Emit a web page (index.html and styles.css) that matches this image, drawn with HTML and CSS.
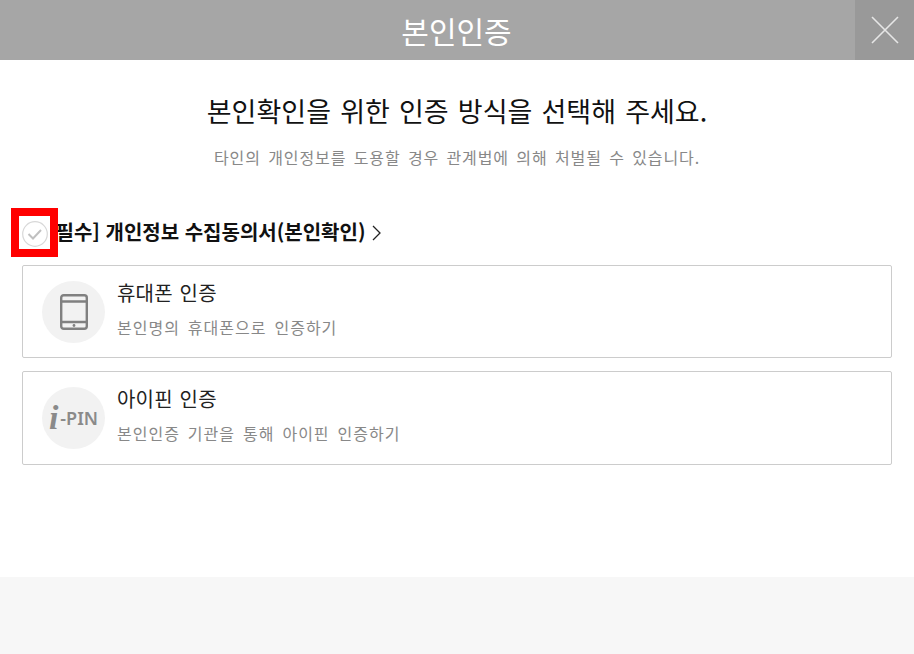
FILE: index.html
```html
<!DOCTYPE html>
<html lang="ko">
<head>
    <meta charset="UTF-8">
    <title>본인인증</title>
    <link rel="stylesheet" href="styles.css">
</head>
<body>
    <header class="top-bar">
        <h1>본인인증</h1>
        <button class="close-btn" aria-label="닫기">
            <svg width="28" height="28" viewBox="0 0 28 28"><path d="M1 1L27 27M27 1L1 27" stroke="#e6e6e6" stroke-width="1.6" fill="none"/></svg>
        </button>
    </header>
    <main class="content">
        <h2 class="title">본인확인을 위한 인증 방식을 선택해 주세요.</h2>
        <p class="notice">타인의 개인정보를 도용할 경우 관계법에 의해 처벌될 수 있습니다.</p>
        <div class="agree">
            <span class="check">
                <svg width="26" height="26" viewBox="0 0 26 26"><circle cx="13" cy="13" r="12.300" fill="#fff" stroke="#d8d8d8" stroke-width="1.200"/><path d="M6.500 13l4.500 4.500 8-8.500" stroke="#c0c0c0" stroke-width="2" fill="none"/></svg>
            </span>
            <a href="#" class="agree-text">[필수] 개인정보 수집동의서(본인확인)</a>
            <svg class="chevron" width="9" height="16" viewBox="0 0 9 16"><path d="M1 1l7 7-7 7" stroke="#222" stroke-width="1.3" fill="none"/></svg>
        </div>
        <a href="#" class="method">
            <span class="method-icon">
                <svg width="30" height="38" viewBox="0 0 30 38"><g fill="none" stroke="#808080" stroke-width="2.400"><rect x="2.200" y="2.200" width="25.600" height="33.600" rx="2.500"/><path d="M2 8.500h26M2 29h26"/></g><circle cx="15" cy="32.500" r="1.400" fill="#808080"/></svg>
            </span>
            <span class="method-text">
                <strong>휴대폰 인증</strong>
                <small>본인명의 휴대폰으로 인증하기</small>
            </span>
        </a>
        <a href="#" class="method method-ipin">
            <span class="method-icon ipin"><i>i</i><b>-PIN</b></span>
            <span class="method-text">
                <strong>아이핀 인증</strong>
                <small>본인인증 기관을 통해 아이핀 인증하기</small>
            </span>
        </a>
    </main>
    <footer class="bottom"></footer>
</body>
</html>
```

FILE: styles.css
```css
* {
    margin: 0;
    padding: 0;
    box-sizing: border-box;
    font-family: "Noto Sans CJK KR", "Noto Sans", sans-serif;
}

body {
    height: 654px;
    overflow: hidden;
    background: #fff;
    display: flex;
    flex-direction: column;
}

.top-bar {
    height: 60px;
    background: #a6a6a6;
    display: flex;
    justify-content: center;
    align-items: center;
    position: relative;
}

.top-bar h1 {
    font-size: 30px;
    font-weight: 400;
    color: #fff;
    margin-right: 1px;
}

.close-btn {
    position: absolute;
    top: 0;
    right: 0;
    width: 59px;
    height: 60px;
    background: #999;
    border: none;
    display: flex;
    justify-content: center;
    align-items: center;
}

.content {
    height: 517px;
    padding: 0 22px;
}

.title {
    margin-top: 33px;
    font-size: 27px;
    line-height: 36px;
    font-weight: 400;
    word-spacing: 1.6px;
    color: #111;
    text-align: center;
}

.notice {
    margin-top: 16px;
    font-size: 16px;
    line-height: 24px;
    letter-spacing: 0.9px;
    word-spacing: 2px;
    color: #888;
    text-align: center;
}

.agree {
    margin-top: 39px;
    height: 49px;
    display: flex;
    align-items: center;
}

.check {
    width: 47px;
    height: 49px;
    margin-left: -11px;
    padding-top: 2px;
    border: 8px solid #f00;
    display: flex;
    justify-content: center;
    align-items: center;
    background: #fff;
    position: relative;
    z-index: 1;
}

.agree-text {
    margin-left: -10px;
    padding-bottom: 2px;
    font-size: 20px;
    font-weight: 700;
    color: #111;
    text-decoration: none;
}

.chevron {
    margin-left: 7px;
}

.method {
    height: 93px;
    margin-top: 8px;
    padding: 0 19px;
    border: 1px solid #ccc;
    border-radius: 2px;
    display: flex;
    align-items: center;
    gap: 12px;
    text-decoration: none;
}

.method-ipin {
    height: 94px;
    margin-top: 13px;
}

.method-icon {
    width: 63px;
    height: 62px;
    border-radius: 50%;
    background: #f2f2f2;
    display: flex;
    justify-content: center;
    align-items: center;
}

.ipin {
    color: #8a8a8a;
}

.ipin i {
    font-family: "Liberation Serif", serif;
    font-size: 34px;
    font-style: italic;
    font-weight: 700;
    margin-right: 2px;
}

.ipin b {
    font-family: "Noto Sans", sans-serif;
    font-size: 18px;
    font-weight: 600;
}

.method-text {
    display: flex;
    flex-direction: column;
    gap: 8px;
    padding-bottom: 6px;
}

.method-text strong {
    font-size: 20px;
    line-height: 28px;
    font-weight: 400;
    letter-spacing: 0.2px;
    word-spacing: 1px;
    color: #222;
}

.method-text small {
    font-size: 16px;
    line-height: 24px;
    letter-spacing: 1px;
    word-spacing: 2.5px;
    color: #888;
}

.bottom {
    flex: 1;
    background: #f7f7f7;
}
```
